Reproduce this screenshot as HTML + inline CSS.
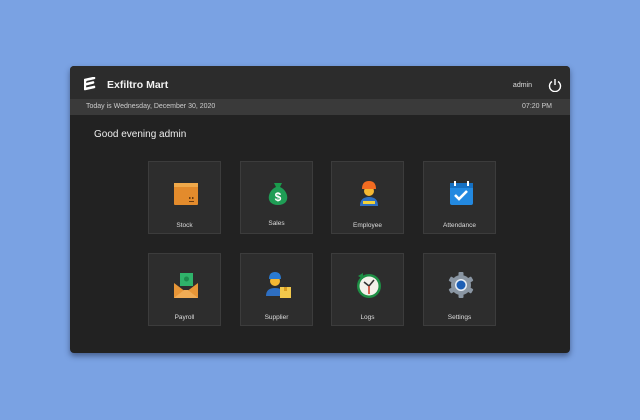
<!DOCTYPE html>
<html><head><meta charset="utf-8"><style>
*{margin:0;padding:0;box-sizing:border-box}
body{width:640px;height:420px;background:#7aa2e3;font-family:"Liberation Sans",sans-serif;position:relative;overflow:hidden}
.win{position:absolute;left:70px;top:66px;width:500px;height:287px;background:#222;border-radius:4px;box-shadow:0 3px 6px rgba(20,30,60,.5);overflow:hidden}
.hdr{height:33px;background:#2c2c2c;position:relative;color:#fff}
.title{position:absolute;left:37px;top:13px;font-size:10.5px;font-weight:bold;color:#f2f2f2}
.admin{position:absolute;right:38px;top:16px;font-size:7px;color:#ddd}
.bar{height:16px;background:#3a3a3a;color:#ccc;font-size:7px;position:relative}
.bar span{position:absolute;top:4px}
.greet{position:absolute;left:24px;top:63px;color:#eee;font-size:10px}
.tile{position:absolute;width:73px;height:73px;background:#2d2d2d;border:1px solid #3c3c3c}
.tile .lb{position:absolute;left:0;right:0;top:60px;text-align:center;font-size:6.5px;color:#ddd}
.tile svg{position:absolute;left:22px;top:16px}
</style></head><body>
<div class="win">
 <div class="hdr">
  <svg style="position:absolute;left:14px;top:11px" width="12" height="15" viewBox="0 0 12 15"><path d="M1 3 L10 1 M1 7.5 L9 5.5 M1 12 L10 10" stroke="#fff" stroke-width="2.6" stroke-linecap="round" fill="none"/><path d="M1.5 3 Q0 7.5 1.5 12" stroke="#fff" stroke-width="2.4" fill="none"/></svg>
  <div class="title">Exfiltro Mart</div>
  <div class="admin">admin</div>
  <svg style="position:absolute;right:8px;top:12px" width="14" height="14" viewBox="0 0 14 14"><path d="M4 3.5 A5.5 5.5 0 1 0 10 3.5" stroke="#fff" stroke-width="1.4" fill="none"/><path d="M7 1 V7" stroke="#fff" stroke-width="1.4"/></svg>
 </div>
 <div class="bar"><span style="left:16px">Today is Wednesday, December 30, 2020</span><span style="right:18px">07:20 PM</span></div>
 <div class="greet">Good evening admin</div>

 <div class="tile" style="left:78px;top:95px"><svg width="30" height="30" viewBox="0 0 30 30"><rect x="3" y="5" width="24" height="22" rx="1" fill="#e38b2c"/><rect x="3" y="5" width="24" height="4" fill="#f0a94a"/><rect x="18" y="19" width="1.5" height="2" fill="#6b3c10"/><rect x="21" y="19" width="1.5" height="2" fill="#6b3c10"/><rect x="18" y="23" width="5" height="1" fill="#6b3c10"/></svg><div class="lb">Stock</div></div>
 <div class="tile" style="left:170px;top:95px"><svg width="30" height="30" viewBox="0 0 30 30"><path d="M11 5 h8 l-2 4 h-4z" fill="#1a9c4c"/><path d="M13 9 h4 C26 13 28 27 15 27 C2 27 4 13 13 9z" fill="#1f9d55"/><text x="15" y="23" font-size="12" font-weight="bold" fill="#fff" text-anchor="middle" font-family="Liberation Sans">$</text></svg><div class="lb" style="top:58px">Sales</div></div>
 <div class="tile" style="left:261px;top:95px"><svg width="30" height="30" viewBox="0 0 30 30"><path d="M6 28 Q6 19 15 19 Q24 19 24 28z" fill="#2e6fc2"/><rect x="9" y="23" width="12" height="3" fill="#f2d23c"/><circle cx="15" cy="13" r="5" fill="#f5b833"/><path d="M8 11 Q8 3 15 3 Q22 3 22 11z" fill="#f26b21"/></svg><div class="lb">Employee</div></div>
 <div class="tile" style="left:353px;top:95px"><svg width="30" height="30" viewBox="0 0 30 30"><rect x="4" y="5" width="23" height="22" rx="2" fill="#2389e0"/><rect x="4" y="5" width="23" height="5" fill="#1570c2"/><rect x="8" y="3" width="2" height="5" fill="#fff"/><rect x="21" y="3" width="2" height="5" fill="#fff"/><path d="M9 17 l4 4 l8 -8" stroke="#fff" stroke-width="2.6" fill="none"/></svg><div class="lb">Attendance</div></div>

 <div class="tile" style="left:78px;top:187px"><svg width="30" height="30" viewBox="0 0 30 30"><rect x="9" y="3" width="13" height="13" fill="#2fb36a"/><circle cx="15.5" cy="9" r="2.5" fill="#1d8a4d"/><path d="M3 13 L15 22 L27 13 V28 H3z" fill="#e89637"/><path d="M3 28 L13 20 L17 20 L27 28z" fill="#f1ac55"/></svg><div class="lb">Payroll</div></div>
 <div class="tile" style="left:170px;top:187px"><svg width="30" height="30" viewBox="0 0 30 30"><path d="M3 26 Q3 18 12 18 Q19 18 20 22 V26z" fill="#2e6fc2"/><circle cx="12" cy="11" r="5" fill="#f5b833"/><path d="M6 9 Q6 2 12 2 Q18 2 18 9z" fill="#2a7ad0"/><rect x="17" y="17" width="11" height="11" fill="#f2c84b"/><rect x="21" y="17" width="3" height="4" fill="#d99d22"/></svg><div class="lb">Supplier</div></div>
 <div class="tile" style="left:261px;top:187px"><svg width="30" height="30" viewBox="0 0 30 30"><circle cx="15" cy="16" r="12" fill="#1e8f45"/><circle cx="15" cy="16" r="9.5" fill="#f4f1ea"/><path d="M15 16 L10 12 M15 16 L20 10" stroke="#333" stroke-width="1.6"/><path d="M15 16 V24" stroke="#d0452d" stroke-width="1.6"/><path d="M4 6 l5 -3 v6z" fill="#1e8f45"/></svg><div class="lb">Logs</div></div>
 <div class="tile" style="left:353px;top:187px"><svg width="30" height="30" viewBox="0 0 30 30"><g fill="#8a96a3"><circle cx="15" cy="15" r="10"/><rect x="12.5" y="2" width="5" height="26" rx="1"/><rect x="12.5" y="2" width="5" height="26" rx="1" transform="rotate(60 15 15)"/><rect x="12.5" y="2" width="5" height="26" rx="1" transform="rotate(120 15 15)"/></g><circle cx="15" cy="15" r="6" fill="#e8eef5"/><circle cx="15" cy="15" r="4.5" fill="#1d5fb5"/></svg><div class="lb">Settings</div></div>
</div>
</body></html>
